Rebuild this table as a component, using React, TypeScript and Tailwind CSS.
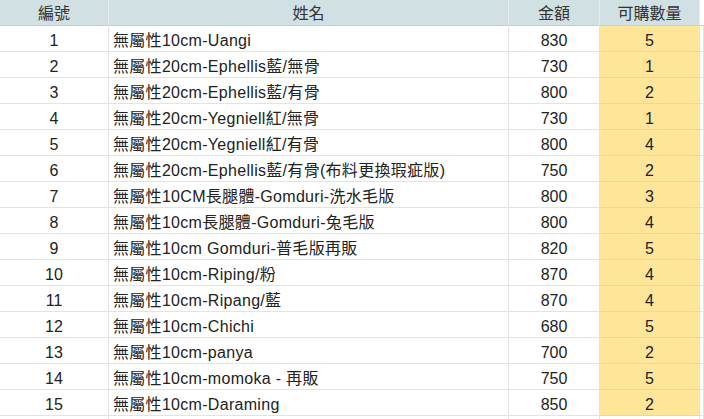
const rows: [number, string, number, number][] = [
  [1, "無屬性10cm-Uangi", 830, 5],
  [2, "無屬性20cm-Ephellis藍/無骨", 730, 1],
  [3, "無屬性20cm-Ephellis藍/有骨", 800, 2],
  [4, "無屬性20cm-Yegniell紅/無骨", 730, 1],
  [5, "無屬性20cm-Yegniell紅/有骨", 800, 4],
  [6, "無屬性20cm-Ephellis藍/有骨(布料更換瑕疵版)", 750, 2],
  [7, "無屬性10CM長腿體-Gomduri-洗水毛版", 800, 3],
  [8, "無屬性10cm長腿體-Gomduri-兔毛版", 800, 4],
  [9, "無屬性10cm Gomduri-普毛版再販", 820, 5],
  [10, "無屬性10cm-Riping/粉", 870, 4],
  [11, "無屬性10cm-Ripang/藍", 870, 4],
  [12, "無屬性10cm-Chichi", 680, 5],
  [13, "無屬性10cm-panya", 700, 2],
  [14, "無屬性10cm-momoka - 再販", 750, 5],
  [15, "無屬性10cm-Daraming", 850, 2],
];

const cols = "grid grid-cols-[109px_400px_91px_100px_1fr]";
const cell = "h-[26px] pt-[4px] border-r border-b border-[#e2e3e3] flex items-center";
const head = "h-[26px] pt-[3px] border-r border-b border-r-[#e6edef] border-b-[#c4d0d3] flex items-center justify-center";

export default function App() {
  return (
    <div
      className="w-[704px] h-[419px] overflow-hidden bg-white text-[16px] leading-none text-[#222]"
      style={{ fontFamily: '"Liberation Sans", "Noto Sans CJK TC", sans-serif' }}
    >
      <div className={`${cols} bg-[#d0e0e3] text-[#333]`}>
        <div className={head}>編號</div>
        <div className={head}>姓名</div>
        <div className={head}>金額</div>
        <div className={head}>可購數量</div>
        <div className="h-[26px] border-b border-b-[#c4d0d3] bg-white"></div>
      </div>
      {rows.map(([id, name, price, qty]) => (
        <div key={id} className={cols}>
          <div className={`${cell} justify-center`}>{id}</div>
          <div className={`${cell} pl-[4px] whitespace-nowrap tracking-[0.3px]`}>{name}</div>
          <div className={`${cell} justify-center`}>{price}</div>
          <div className="h-[26px] pt-[4px] border-r border-b border-r-[#e2e3e3] border-b-[#ecd79b] bg-[#ffe599] flex items-center justify-center">{qty}</div>
          <div className={cell}></div>
        </div>
      ))}
      <div className={cols}>
        <div className={cell}></div>
        <div className={cell}></div>
        <div className={cell}></div>
        <div className="h-[26px] border-r border-b border-[#e2e3e3]"></div>
        <div className={cell}></div>
      </div>
    </div>
  );
}
